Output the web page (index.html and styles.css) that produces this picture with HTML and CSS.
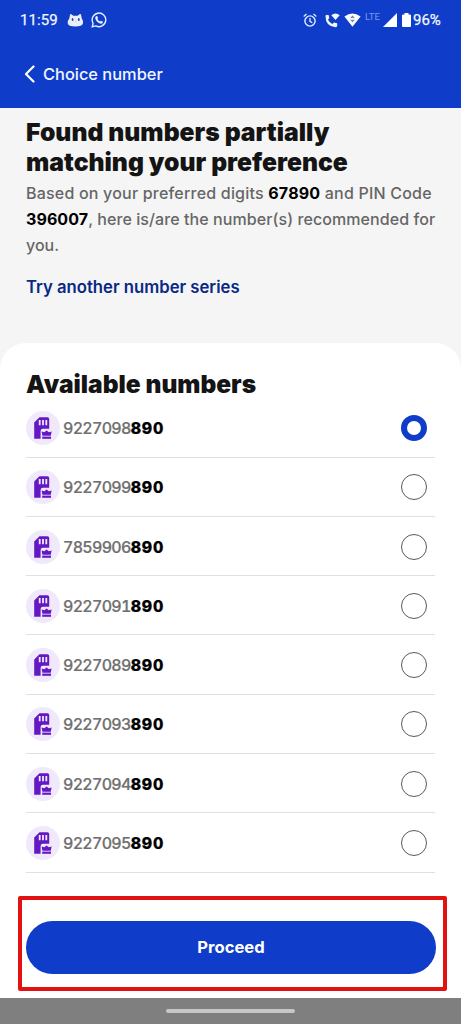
FILE: index.html
```html
<!DOCTYPE html>
<html lang="en">
<head>
<meta charset="utf-8">
<title>Choice number</title>
<link rel="stylesheet" href="styles.css">
</head>
<body>
<svg class="defs" width="0" height="0" aria-hidden="true">
  <symbol id="sim" viewBox="0 0 34 34">
    <circle cx="17" cy="17" r="17" fill="#f0e9fc"/>
    <path d="M13.5 6.2H21.5Q23.2 6.2 23.2 8V17.8H17Q14.6 17.8 14.6 20V27.8H8.2V11.6Z" fill="#6418c3"/>
    <path d="M13.7 9V14.2M17 9V14.2M20.3 9V14.2" stroke="#f0e9fc" stroke-width="1.8"/>
    <path d="M15.6 20.4L18.3 21.3 20.6 19.5 22.9 21.3 25.6 20.4 24.8 24.7H16.4Z" fill="#6418c3"/>
    <path d="M16.2 25.6H25V27.8H16.2Z" fill="#6418c3"/>
  </symbol>
</svg>
<header class="topbar">
  <div class="status">
    <span class="clock">11:59</span>
    <svg class="cat" width="17" height="15" viewBox="0 0 17 15"><path d="M3 1.5Q3.3.5 4.3 1.2L6.4 2.8H10.6L12.8 1.1Q13.7.5 14 1.5L14.7 5.2Q16.3 7.5 16 10.3 15.2 13.5 8.5 13.5 1.2 13.5.7 10.3.5 7.5 2.4 5.2Z" fill="#e9effc"/><ellipse cx="5.6" cy="6.4" rx=".9" ry="1.5" fill="#31478b"/><ellipse cx="11.8" cy="6.4" rx=".9" ry="1.5" fill="#31478b"/><path d="M7.8 8Q8.6 8.6 9.4 8" stroke="#a9b8df" stroke-width=".7" fill="none"/></svg>
    <svg class="whatsapp" width="16" height="16" viewBox="0 0 16 16"><path d="M1.2 14.8L2.1 11.3A6.8 6.8 0 1 1 4.8 13.9Z" fill="none" stroke="#e4efff" stroke-width="1.4"/><path d="M5.1 4.2L6.2 4 7.1 6 6.4 7Q7.2 8.8 9.2 9.6L10 8.7 12 9.7Q12 11.7 10 11.8 8.3 11.7 6.4 10 4.3 8 4.2 6 4.2 4.9 5.1 4.2Z" fill="#e4efff"/></svg>
    <div class="indicators">
      <svg width="14" height="15" viewBox="0 0 14 15"><circle cx="7" cy="8" r="5.1" fill="none" stroke="#e4efff" stroke-width="1.4"/><path d="M.7 3.5L3.5 1.1M13.3 3.5L10.5 1.1M7 5V8.3L9.3 9.7" fill="none" stroke="#e4efff" stroke-width="1.3"/></svg>
      <svg class="call" width="15" height="15" viewBox="0 0 15 15"><path d="M.5 3Q.5 2 1.5 2H3.6L4.3 5 3 6.7Q4.5 9.7 7.3 11L9 9.6 12.2 10.3V12.6Q12.2 14.3 10.6 14.2 .5 13.5.5 3Z" fill="#f2f7ff"/><path d="M6.3 2.2Q10.5-1.2 14.7 2.2L10.5 7Z" fill="#f2f7ff"/></svg>
      <svg class="wifi" width="17" height="14" viewBox="0 0 17 14"><path d="M.4 3.5Q8.5-2.6 16.6 3.5L8.5 13.7Z" fill="#f8fbff"/><path d="M6.2 5L8.5 2.6 10.8 5ZM6.2 6.8L8.5 9.2 10.8 6.8Z" fill="#74879b"/></svg>
      <span class="lte">LTE</span>
      <svg class="signal" width="14" height="14" viewBox="0 0 14 14"><path d="M0 14L14 0V14Z" fill="#fff"/></svg>
      <svg class="battery" width="9" height="14" viewBox="0 0 9 14"><path d="M2.5 0H6.5V1.4H8Q9 1.4 9 2.4V13Q9 14 8 14H1Q0 14 0 13V2.4Q0 1.4 1 1.4H2.5Z" fill="#fff"/></svg>
      <span class="percent">96%</span>
    </div>
  </div>
  <nav class="nav">
    <svg width="11" height="18" viewBox="0 0 11 18"><path d="M9.5 1.5L2 9 9.5 16.5" fill="none" stroke="#fff" stroke-width="2.2" stroke-linecap="round" stroke-linejoin="round"/></svg>
    <span class="nav-title">Choice number</span>
  </nav>
</header>
<main class="page">
  <section class="intro">
    <h1 class="heading">Found numbers partially<br>matching your preference</h1>
    <p class="copy"><span class="line-one">Based on your preferred digits <b>67890</b> and PIN Code</span><br><span class="line-two"><b>396007</b>, here is/are the number(s) recommended for</span><br>you.</p>
    <a class="retry">Try another number series</a>
  </section>
  <section class="sheet">
    <h2 class="heading available">Available numbers</h2>
    <ul class="numbers">
      <li class="row"><svg class="sim"><use href="#sim"/></svg><span class="number">9227098<b>890</b></span><i class="radio selected"></i></li>
      <li class="row"><svg class="sim"><use href="#sim"/></svg><span class="number">9227099<b>890</b></span><i class="radio"></i></li>
      <li class="row"><svg class="sim"><use href="#sim"/></svg><span class="number">7859906<b>890</b></span><i class="radio"></i></li>
      <li class="row"><svg class="sim"><use href="#sim"/></svg><span class="number">9227091<b>890</b></span><i class="radio"></i></li>
      <li class="row"><svg class="sim"><use href="#sim"/></svg><span class="number">9227089<b>890</b></span><i class="radio"></i></li>
      <li class="row"><svg class="sim"><use href="#sim"/></svg><span class="number">9227093<b>890</b></span><i class="radio"></i></li>
      <li class="row"><svg class="sim"><use href="#sim"/></svg><span class="number">9227094<b>890</b></span><i class="radio"></i></li>
      <li class="row"><svg class="sim"><use href="#sim"/></svg><span class="number">9227095<b>890</b></span><i class="radio"></i></li>
    </ul>
    <div class="highlight"><button class="proceed">Proceed</button></div>
  </section>
</main>
<footer class="gesture"><div class="handle"></div></footer>
</body>
</html>
```
FILE: styles.css
```css
* { box-sizing: border-box; }
body { margin: 0; width: 461px; height: 1024px; overflow: hidden; display: flex; flex-direction: column; background: #fff; font-family: Inter, "Liberation Sans", sans-serif; }
svg { flex: none; display: block; }
.defs { position: absolute; }
.topbar { height: 108px; flex: none; background: #0f3cc9; color: #f0f6ff; }
.status { height: 40px; padding: 0 20px; display: flex; align-items: center; font-family: Roboto, sans-serif; font-size: 15px; font-weight: 500; }
.clock { width: 38px; font-weight: 400; letter-spacing: .1px; -webkit-text-stroke: .25px currentColor; }
.cat { margin-left: 9px; }
.whatsapp { margin-left: 7px; }
.indicators { margin-left: auto; display: flex; align-items: center; }
.indicators > :first-child { margin-right: 1px; }
.call { margin-left: 7px; }
.wifi { margin-left: 4px; }
.lte { margin: -7px 0 0 4px; width: 17px; font-size: 9.5px; line-height: 10px; font-weight: 400; color: #7898f0; }
.signal { margin-left: 1px; }
.battery { margin-left: 5px; }
.percent { margin-left: 2px; width: 28px; font-weight: 400; -webkit-text-stroke: .25px currentColor; }
.nav { height: 68px; padding: 0 24px; display: flex; align-items: center; gap: 8px; }
.nav-title { font-size: 16.4px; font-weight: 500; }
.page { flex: 1; display: flex; flex-direction: column; background: #f5f5f5; }
.intro { height: 235px; flex: none; padding: 9px 26px 0; }
.heading { margin: 0; font-size: 24.7px; line-height: 30px; font-weight: 900; color: #141414; white-space: nowrap; }
.copy { margin: 3px 0 0; font-size: 16px; line-height: 26px; font-weight: 500; color: #666; white-space: nowrap; }
.copy b { color: #000; font-weight: 700; }
.line-one { letter-spacing: .2px; }
.line-two { letter-spacing: .08px; }
.retry { display: block; margin-top: 16px; font-size: 16.7px; line-height: 26px; font-weight: 600; color: #0a2885; }
.sheet { flex: 1; background: #fff; border-radius: 26px 26px 0 0; padding: 26px 26px 0; }
.available { height: 29.3px; font-size: 24.5px; }
.numbers { margin: 0; padding: 0; list-style: none; }
.row { height: 59.3px; border-bottom: 1px solid #e0e0e0; padding-top: 1px; display: flex; align-items: center; }
.sim { width: 34px; height: 34px; }
.number { margin-left: 3px; font-size: 16px; font-weight: 500; font-variant-numeric: tabular-nums; letter-spacing: -.7px; color: #707070; -webkit-text-stroke: .2px currentColor; }
.number b { font-weight: 800; letter-spacing: .8px; color: #000; }
.radio { margin-left: auto; margin-right: 8px; width: 26px; height: 26px; border: 1px solid #595959; border-radius: 50%; }
.radio.selected { border: 6.5px solid #0f3cc9; }
.highlight { margin: 23.5px -12px 0 -8px; height: 95px; padding: 21px 8px 0 4px; border: 4px solid #e31212; border-radius: 2px; }
.proceed { display: block; width: 410px; height: 53px; padding: 0 0 2px; border: 0; border-radius: 27px; background: #0f3cc9; color: #fff; font: 700 16.6px Inter, sans-serif; }
.gesture { height: 26px; flex: none; background: #7f7f7f; padding-top: 11px; }
.handle { width: 129px; height: 4px; margin: 0 auto; border-radius: 2px; background: #c7c7c7; }
```
